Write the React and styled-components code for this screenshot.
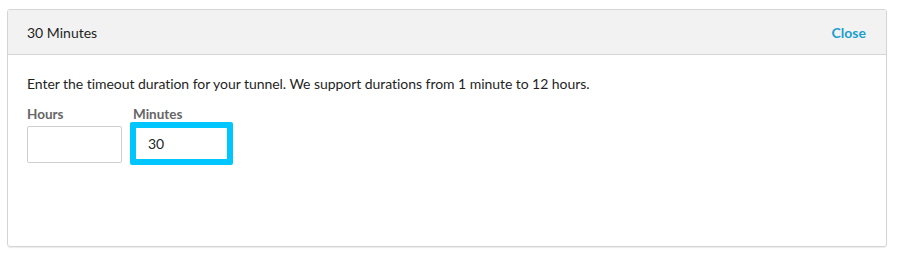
import React from "react";
import styled, { createGlobalStyle } from "styled-components";

const Global = createGlobalStyle`
  html, body { margin: 0; padding: 0; background: #fff; }
  body { font-family: Lato, "Open Sans", Arial, sans-serif; color: #222; }
  * { box-sizing: border-box; }
`;

const Page = styled.div`
  padding: 9px 13px 9px 7px;
`;

const Card = styled.div`
  height: 238px;
  border: 1px solid #d5d5d5;
  border-radius: 3px;
  box-shadow: 0 1px 1px rgba(0,0,0,0.08);
  display: flex;
  flex-direction: column;
  overflow: hidden;
`;

const Header = styled.div`
  height: 45px;
  background: #f2f2f2;
  border-bottom: 1px solid #d5d5d5;
  display: flex;
  align-items: center;
  justify-content: space-between;
  padding: 0 20px 0 19px;
  font-size: 14px;
  color: #1f1f1f;
`;

const CloseLink = styled.a`
  color: #1a9fcf;
  font-weight: 700;
  font-size: 14px;
  cursor: pointer;
`;

const Body = styled.div`
  padding: 19px 19px;
  display: flex;
  flex-direction: column;
  gap: 12px;
`;

const Text = styled.p`
  margin: 0;
  font-size: 14px;
  line-height: 20px;
  color: #1f1f1f;
  letter-spacing: -0.05px;
`;

const Fields = styled.div`
  display: flex;
  gap: 8px;
`;

const Field = styled.div`
  display: flex;
  flex-direction: column;
  gap: 4px;
`;

const Label = styled.label`
  font-size: 13.5px;
  font-weight: 700;
  color: #666;
  line-height: 16px;
  padding-left: ${p => (p.$focused ? "3px" : "0")};
`;

const Input = styled.input`
  width: ${p => (p.$focused ? "103px" : "95px")};
  height: ${p => (p.$focused ? "43px" : "37px")};
  margin-top: ${p => (p.$focused ? "-4px" : "0")};
  border: ${p => (p.$focused ? "6px solid #00c6ff" : "1px solid #cfcfcf")};
  border-radius: 2px;
  padding: 0 ${p => (p.$focused ? "12px" : "8px")};
  font-family: Lato, "Open Sans", Arial, sans-serif;
  font-size: 14px;
  color: #1f1f1f;
  outline: none;
  background: #fff;
`;

export default function App() {
  return (
    <>
      <Global />
      <Page>
        <Card>
          <Header>
            <span>30 Minutes</span>
            <CloseLink>Close</CloseLink>
          </Header>
          <Body>
            <Text>
              Enter the timeout duration for your tunnel. We support durations from 1 minute to 12 hours.
            </Text>
            <Fields>
              <Field>
                <Label>Hours</Label>
                <Input defaultValue="" />
              </Field>
              <Field>
                <Label $focused>Minutes</Label>
                <Input $focused defaultValue="30" />
              </Field>
            </Fields>
          </Body>
        </Card>
      </Page>
    </>
  );
}
